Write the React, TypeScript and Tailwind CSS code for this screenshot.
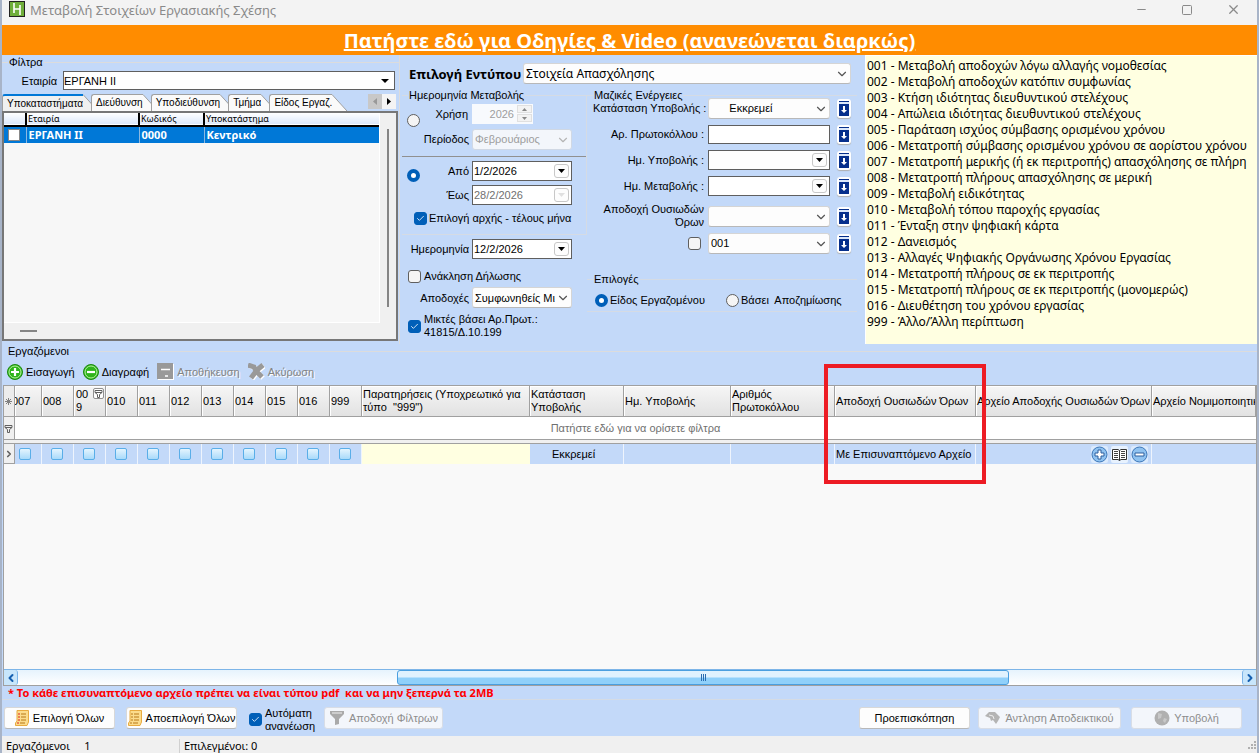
import React from 'react';
import { ChevronDown, ChevronLeft, ChevronRight, Check, Minus, Square, X } from 'lucide-react';

const codes = [
  '001 - Μεταβολή αποδοχών λόγω αλλαγής νομοθεσίας',
  '002 - Μεταβολή αποδοχών κατόπιν συμφωνίας',
  '003 - Κτήση ιδιότητας διευθυντικού στελέχους',
  '004 - Απώλεια ιδιότητας διευθυντικού στελέχους',
  '005 - Παράταση ισχύος σύμβασης ορισμένου χρόνου',
  '006 - Μετατροπή σύμβασης ορισμένου χρόνου σε αορίστου χρόνου',
  '007 - Μετατροπή μερικής (ή εκ περιτροπής) απασχόλησης σε πλήρη',
  '008 - Μετατροπή πλήρους απασχόλησης σε μερική',
  '009 - Μεταβολή ειδικότητας',
  '010 - Μεταβολή τόπου παροχής εργασίας',
  '011 - Ένταξη στην ψηφιακή κάρτα',
  '012 - Δανεισμός',
  '013 - Αλλαγές Ψηφιακής Οργάνωσης Χρόνου Εργασίας',
  '014 - Μετατροπή πλήρους σε εκ περιτροπής',
  '015 - Μετατροπή πλήρους σε εκ περιτροπής (μονομερώς)',
  '016 - Διευθέτηση του χρόνου εργασίας',
  '999 - Άλλο/Άλλη περίπτωση',
];

const flagColumns = ['007', '008', '009', '010', '011', '012', '013', '014', '015', '016', '999'];

interface TabProps {
  label: string;
  active?: boolean;
}

const Tab: React.FC<TabProps> = ({ label, active }) => (
  <button type="button" role="tab" aria-selected={!!active} className="-mr-[7px] flex h-[17px] text-[10px] leading-[15px]">
    <span
      className={`h-full rounded-tl-[3px] border-l border-t pl-1 whitespace-nowrap ${
        active ? 'border-l-[#a0a0a0] border-t-2 border-t-[#0078d7] bg-[#f0f0f0]' : 'border-[#a0a0a0] bg-[#fafafa]'
      }`}
    >
      {label}
    </span>
    <svg width="15" height="17" viewBox="0 0 15 17" className="shrink-0">
      <path d="M0 0.5L15 17H0z" fill={active ? '#f0f0f0' : '#fafafa'} />
      <path d="M0 0.5L15 17" stroke="#a0a0a0" />
    </svg>
  </button>
);

interface ComboProps {
  id: string;
  value: string;
  disabled?: boolean;
  className?: string;
}

const Combo: React.FC<ComboProps> = ({ id, value, disabled, className = '' }) => (
  <div className={`relative h-[21px] ${className}`}>
    <select
      id={id}
      disabled={disabled}
      className="block h-full w-full appearance-none rounded-[3px] border border-[#d5d5d5] border-b-[#b8b8b8] bg-[#fdfdfd] pr-4 pl-[2px] disabled:border-[#d0d8e4] disabled:bg-[#f3f6fb] disabled:text-[#9d9d9d] disabled:opacity-100"
    >
      <option>{value}</option>
    </select>
    <ChevronDown size={14} strokeWidth={2} className={`pointer-events-none absolute top-1 right-[2px] ${disabled ? 'text-[#b5b5b5]' : 'text-[#555]'}`} />
  </div>
);

const DateField: React.FC<ComboProps> = ({ id, value, disabled, className = '' }) => (
  <div className={`flex h-5 items-center border border-[#5f5f5f] bg-white pr-[2px] ${className}`}>
    <input id={id} defaultValue={value} disabled={disabled} className="w-0 min-w-0 flex-1 pl-px disabled:text-[#707070]" />
    <button type="button" aria-label="Ημερολόγιο" disabled={disabled} className="flex h-[14px] w-[15px] shrink-0 items-center justify-center rounded-[3px] border border-[#c8c8c8] bg-[#fdfdfd]">
      <svg width="7" height="4" viewBox="0 0 7 4">
        <path d="M0 0H7L3.5 4z" fill={disabled ? '#e0e0e0' : '#000'} />
      </svg>
    </button>
  </div>
);

interface TickProps {
  id?: string;
  label?: string;
  checked?: boolean;
}

const Tick: React.FC<TickProps> = ({ id, label, checked }) => (
  <span className="relative flex h-[13px] w-[13px] shrink-0">
    <input
      id={id}
      type="checkbox"
      aria-label={label}
      defaultChecked={checked}
      className="peer h-[13px] w-[13px] appearance-none rounded-[3px] border border-[#5f5f5f] bg-[#f5f5f5] checked:border-[#005fb8] checked:bg-[#005fb8]"
    />
    <Check size={9} strokeWidth={2.5} className="pointer-events-none absolute top-[2px] left-[2px] hidden text-[#d8e8f8] peer-checked:block" />
  </span>
);

interface RadioProps {
  id: string;
  name: string;
  label?: string;
  checked?: boolean;
}

const Radio: React.FC<RadioProps> = ({ id, name, label, checked }) => (
  <input
    id={id}
    name={name}
    type="radio"
    aria-label={label}
    defaultChecked={checked}
    className="h-[13px] w-[13px] shrink-0 appearance-none rounded-full border border-[#5f5f5f] bg-[#f5f5f5] checked:border-4 checked:border-[#005fb8] checked:bg-white"
  />
);

const ApplyButton = () => (
  <button type="button" aria-label="Εφαρμογή σε όλους" className="flex h-[19px] w-[14px] shrink-0 items-center justify-center rounded-[3px] bg-white shadow-[0_1px_1px_#b0b0b0]">
    <svg width="10" height="15" viewBox="0 0 10 15">
      <rect width="10" height="15" fill="#062f8c" />
      <rect y="1" width="10" height="2" fill="#dce8fa" />
      <path d="M4 5H6V9H8L5 12L2 9H4z" fill="#fff" />
    </svg>
  </button>
);

const FunnelIcon = () => (
  <svg width="9" height="9" viewBox="0 0 9 9">
    <path d="M1 1.5H8V3.5L5.5 5.5V8.5H3.5V5.5L1 3.5zM1 3.5H8" fill="none" stroke="#606060" />
  </svg>
);

interface BulkRowProps {
  id: string;
  label: string;
  children: React.ReactNode;
}

const BulkRow: React.FC<BulkRowProps> = ({ id, label, children }) => (
  <div className="flex h-[26px] items-center">
    <label htmlFor={id} className="w-[111px] shrink-0 text-right whitespace-nowrap">{label}</label>
    <div className="ml-1 w-[122px] shrink-0">{children}</div>
    <div className="ml-[7px]"><ApplyButton /></div>
  </div>
);

const Filters = () => (
  <section className="flex w-[398px] shrink-0 flex-col border-r border-[#dcdcdc] pb-[3px]">
    <fieldset className="flex min-h-0 flex-1 flex-col border-t border-[#dcdcdc] pr-px">
      <legend className="ml-[6px] px-px leading-[14px]">Φίλτρα</legend>
      <div className="mt-[2px] flex items-center pr-[3px]">
        <label htmlFor="company" className="w-[61px] shrink-0 pt-px pr-[6px] text-right">Εταιρία</label>
        <div className="relative h-[19px] flex-1">
          <select id="company" className="block h-full w-full appearance-none border border-[#5f5f5f] bg-white pr-4">
            <option>ΕΡΓΑΝΗ ΙΙ</option>
          </select>
          <svg width="8" height="4" viewBox="0 0 8 4" className="pointer-events-none absolute top-2 right-[6px]">
            <path d="M0 0H8L4 4z" fill="#000" />
          </svg>
        </div>
      </div>
      <div className="mt-1 flex items-end justify-between pr-[2px]">
        <div role="tablist" className="flex">
          <Tab label="Υποκαταστήματα" active />
          <Tab label="Διεύθυνση" />
          <Tab label="Υποδιεύθυνση" />
          <Tab label="Τμήμα" />
          <Tab label="Είδος Εργαζ." />
        </div>
        <div className="mb-[2px] flex h-[15px]">
          <button type="button" aria-label="Προηγούμενη καρτέλα" className="flex w-[14px] items-center justify-center bg-[#c8c8c8]">
            <svg width="4" height="7" viewBox="0 0 4 7"><path d="M4 0V7L0 3.5z" fill="#999" /></svg>
          </button>
          <button type="button" aria-label="Επόμενη καρτέλα" className="flex w-[14px] items-center justify-center bg-[#f4f4f4]">
            <svg width="4" height="7" viewBox="0 0 4 7"><path d="M0 0V7L4 3.5z" fill="#000" /></svg>
          </button>
        </div>
      </div>
      <div className="flex min-h-0 flex-1 flex-col border-2 border-[#777] bg-[#f0f0f0] font-['Noto_Sans',sans-serif]">
        <div className="flex flex-1">
          <div className="flex-1 border-r border-b border-white bg-[#f7f7f7]">
            <table className="w-full table-fixed border-collapse text-left">
              <colgroup>
                <col className="w-[22px]" />
                <col className="w-[113px]" />
                <col className="w-[65px]" />
                <col />
              </colgroup>
              <thead>
                <tr className="h-[13px] border-b-2 border-black bg-linear-to-b from-white to-[#dce8fa] text-[9px] leading-[12px]">
                  <th className="font-normal" />
                  <th className="border-l-2 border-black pl-px font-normal">Εταιρία</th>
                  <th className="border-l-2 border-black pl-px font-normal">Κωδικός</th>
                  <th className="border-l-2 border-black pl-px font-normal">Υποκατάστημα</th>
                </tr>
              </thead>
              <tbody>
                <tr className="h-4 bg-[#0078d7] leading-4 text-white">
                  <td className="pl-1">
                    <input type="checkbox" aria-label="ΕΡΓΑΝΗ ΙΙ" className="block h-3 w-3 appearance-none border border-[#888] bg-white" />
                  </td>
                  <td className="border-l border-[#8cb8e0] pl-[2px] font-bold">ΕΡΓΑΝΗ ΙΙ</td>
                  <td className="border-l border-[#8cb8e0] pl-[2px] font-bold">0000</td>
                  <td className="border-l border-[#8cb8e0] pl-[2px] font-bold">Κεντρικό</td>
                </tr>
              </tbody>
            </table>
          </div>
          <div className="flex w-4 justify-center pt-4 pb-4">
            <div className="w-[2px] bg-[#858585]" />
          </div>
        </div>
        <div className="flex h-4 items-center pl-4">
          <div className="h-[2px] w-[17px] bg-[#858585]" />
        </div>
      </div>
    </fieldset>
  </section>
);

const PeriodPanel = () => (
  <div className="w-[185px] shrink-0">
    <fieldset className="border border-[#d5dbe4] border-l-0">
      <legend className="ml-[6px] px-px leading-3">Ημερομηνία Μεταβολής</legend>
      <div className="flex h-[56px] items-center border-b border-[#909090] pl-[5px]">
        <div className="-mt-4 flex"><Radio id="by-period" name="period" label="Χρήση και περίοδος" /></div>
        <div className="flex flex-1 flex-col gap-[5px] pb-1">
          <div className="flex items-center">
            <label htmlFor="year" className="w-[52px] pr-1 text-right">Χρήση</label>
            <div className="flex h-5 w-[61px] items-center bg-[#f8fafd] pr-px">
              <input id="year" defaultValue="2026" disabled className="w-0 min-w-0 flex-1 pr-[3px] text-right text-[#9d9d9d]" />
              <div className="flex flex-col gap-px">
                <button type="button" disabled aria-label="Αύξηση" className="flex h-2 w-[15px] items-center justify-center border border-[#e0e0e0] bg-[#f3f3f3]">
                  <svg width="5" height="3" viewBox="0 0 5 3"><path d="M0 3H5L2.5 0z" fill="#888" /></svg>
                </button>
                <button type="button" disabled aria-label="Μείωση" className="flex h-2 w-[15px] items-center justify-center border border-[#e0e0e0] bg-[#f3f3f3]">
                  <svg width="5" height="3" viewBox="0 0 5 3"><path d="M0 0H5L2.5 3z" fill="#888" /></svg>
                </button>
              </div>
            </div>
          </div>
          <div className="flex items-center">
            <label htmlFor="month" className="w-[52px] pr-[3px] text-right">Περίοδος</label>
            <Combo id="month" value="Φεβρουάριος" disabled className="w-[100px]" />
          </div>
        </div>
      </div>
      <div className="flex flex-col pt-1 pb-[9px] pl-[5px]">
        <div className="flex items-start">
          <div className="flex pt-2"><Radio id="by-range" name="period" label="Από - Έως" checked /></div>
          <div className="flex flex-col gap-1">
            <div className="flex items-center">
              <label htmlFor="from" className="w-[52px] pr-[3px] text-right">Από</label>
              <DateField id="from" value="1/2/2026" className="w-[100px]" />
            </div>
            <div className="flex items-center">
              <label htmlFor="to" className="w-[52px] pr-[3px] text-right">Έως</label>
              <DateField id="to" value="28/2/2026" disabled className="w-[100px]" />
            </div>
          </div>
        </div>
        <div className="flex items-center gap-[2px] pt-[6px] pl-[7px]">
          <Tick id="month-bounds" checked />
          <label htmlFor="month-bounds" className="whitespace-nowrap">Επιλογή αρχής - τέλους μήνα</label>
        </div>
      </div>
    </fieldset>
    <div className="flex items-center pt-1 pl-[5px]">
      <label htmlFor="date" className="w-[65px] pr-[3px] text-right">Ημερομηνία</label>
      <DateField id="date" value="12/2/2026" className="w-[100px]" />
    </div>
    <div className="mt-[10px] flex items-center gap-[3px] pl-[6px]">
      <Tick id="recall" />
      <label htmlFor="recall">Ανάκληση Δήλωσης</label>
    </div>
    <div className="mt-1 flex items-center pl-[5px]">
      <label htmlFor="pay" className="w-[65px] pr-[3px] text-right">Αποδοχές</label>
      <Combo id="pay" value="Συμφωνηθείς Μισθός" className="w-[100px]" />
    </div>
    <div className="mt-[5px] flex items-center gap-[3px] pl-[6px]">
      <Tick id="mixed" checked />
      <label htmlFor="mixed" className="leading-[13px]">
        Μικτές βάσει Αρ.Πρωτ.:
        <br />
        41815/Δ.10.199
      </label>
    </div>
  </div>
);

const BulkPanel = () => (
  <div className="min-w-0 flex-1">
    <fieldset className="border-t border-[#d5dbe4] pl-[6px]">
      <legend className="px-px leading-3">Μαζικές Ενέργειες</legend>
      <div className="-mt-[6px]">
        <BulkRow id="status" label="Κατάσταση Υποβολής :">
          <Combo id="status" value={'\u00a0\u00a0\u00a0\u00a0\u00a0\u00a0Εκκρεμεί'} />
        </BulkRow>
        <BulkRow id="protocol" label="Αρ. Πρωτοκόλλου :">
          <input id="protocol" className="block h-[19px] w-full border border-[#5f5f5f] bg-white px-1" />
        </BulkRow>
        <BulkRow id="submitted" label="Ημ. Υποβολής :"><DateField id="submitted" value="" /></BulkRow>
        <BulkRow id="changed" label="Ημ. Μεταβολής :"><DateField id="changed" value="" /></BulkRow>
        <div className="flex h-[34px] items-center">
          <label htmlFor="terms" className="w-[111px] shrink-0 text-right leading-[13px] whitespace-nowrap">
            Αποδοχή Ουσιωδών
            <br />
            Όρων
          </label>
          <Combo id="terms" value="" className="ml-1 w-[122px] shrink-0" />
          <div className="ml-[7px]"><ApplyButton /></div>
        </div>
        <div className="flex h-5 items-center">
          <div className="flex w-[111px] shrink-0 justify-end pr-[3px]"><Tick label="Εφαρμογή κωδικού" /></div>
          <div className="ml-1 w-[122px] shrink-0">
            <Combo id="code" value="001" />
          </div>
          <div className="ml-[7px]"><ApplyButton /></div>
        </div>
      </div>
    </fieldset>
    <fieldset className="mt-5 border-t border-b border-[#d5dbe4] pb-1 pl-[6px]">
      <legend className="px-px leading-3">Επιλογές</legend>
      <div className="flex h-[22px] items-center pt-[8px] pl-[2px]">
        <div className="flex w-[131px] items-center gap-[2px]">
          <Radio id="kind" name="options" checked />
          <label htmlFor="kind" className="whitespace-nowrap">Είδος Εργαζομένου</label>
        </div>
        <div className="flex items-center gap-[2px]">
          <Radio id="severance" name="options" />
          <label htmlFor="severance" className="whitespace-pre">Βάσει  Αποζημίωσης</label>
        </div>
      </div>
    </fieldset>
  </div>
);

const Ball = ({ plus }: { plus?: boolean }) => (
  <svg width="16" height="16" viewBox="0 0 16 16">
    <circle cx="8" cy="8" r="7.5" fill="#2fb41c" stroke="#1d8a10" />
    <circle cx="8" cy="8" r="6" fill="none" stroke="#b4f09c" />
    <path d={plus ? 'M8 4V12M4 8H12' : 'M4 8H12'} stroke="#fff" strokeWidth="2.2" />
  </svg>
);

const Toolbar = () => (
  <div className="flex h-[27px] items-center gap-2 pl-[5px]">
    <button type="button" className="flex items-center gap-[3px]"><Ball plus />Εισαγωγή</button>
    <button type="button" className="flex items-center gap-[3px]"><Ball />Διαγραφή</button>
    <button type="button" disabled className="flex items-center gap-[3px] text-[#838383] [text-shadow:1px_1px_0_#fff]">
      <svg width="17" height="17" viewBox="0 0 17 17">
        <path d="M1 1H17V17H1z" fill="#fff" />
        <path d="M0 0H16V16H0z" fill="#999" />
        <path d="M4 6.5H13M8 13H11" stroke="#fff" strokeWidth="1.6" />
      </svg>
      Αποθήκευση
    </button>
    <button type="button" disabled className="flex items-center gap-[3px] text-[#838383] [text-shadow:1px_1px_0_#fff]">
      <svg width="17" height="17" viewBox="0 0 17 17">
        <path d="M2 3L7 5L9 9L15 15M16 3L10 8L4 16" fill="none" stroke="#fff" strokeWidth="5" />
        <path d="M0 2L6 4L8 8L14 14M15 2L9 7L3 15" fill="none" stroke="#999" strokeWidth="5" />
      </svg>
      Ακύρωση
    </button>
  </div>
);

const headCell = 'overflow-hidden border-r border-b border-[#a0a0a0] bg-linear-to-b from-[#f6f6f6] to-[#e2e2e2] px-px text-left font-normal leading-[13px] shadow-[inset_1px_1px_0_#fff]';
const rowCell = 'overflow-hidden border-r border-[#eef4fd] whitespace-nowrap';

const EmployeesGrid = () => (
  <div className="ml-px flex min-h-0 flex-1 flex-col overflow-hidden border border-[#a0a0a0] bg-[#f9f9f9]">
    <table className="w-full table-fixed border-separate border-spacing-0">
      <colgroup>
        <col className="w-[11px]" />
        <col className="w-[27px]" />
        {flagColumns.slice(1).map((code) => <col key={code} className="w-8" />)}
        <col className="w-[168px]" />
        <col className="w-[94px]" />
        <col className="w-[107px]" />
        <col className="w-[104px]" />
        <col className="w-[141px]" />
        <col className="w-[176px]" />
        <col />
      </colgroup>
      <thead>
        <tr className="h-[31px]">
          <th className="border-r border-b border-[#a0a0a0] bg-[#ececec]">
            <svg width="9" height="9" viewBox="0 0 9 9">
              <path d="M4.5 1V8M1 4.5H8M2 2L7 7M7 2L2 7" stroke="#808080" />
            </svg>
          </th>
          {flagColumns.map((code, i) => (
            <th key={code} className={headCell}>
              {i === 0 && <span className="-ml-[4px]">{code}</span>}
              {i === 2 && (
                <span className="flex items-start justify-between pl-px">
                  <span>00<br />9</span>
                  <span className="flex h-[11px] w-[11px] items-center justify-center rounded-[2px] border border-[#909090] bg-white"><FunnelIcon /></span>
                </span>
              )}
              {i !== 0 && i !== 2 && code}
            </th>
          ))}
          <th className={`${headCell} whitespace-pre`}>Παρατηρήσεις (Υποχρεωτικό για{'\n'}τύπο  "999")</th>
          <th className={headCell}>Κατάσταση Υποβολής</th>
          <th className={headCell}>Ημ. Υποβολής</th>
          <th className={headCell}>Αριθμός Πρωτοκόλλου</th>
          <th className={`${headCell} whitespace-nowrap`}>Αποδοχή Ουσιωδών Όρων</th>
          <th className={`${headCell} whitespace-nowrap`}>Αρχείο Αποδοχής Ουσιωδών Όρων</th>
          <th className={`${headCell} whitespace-nowrap`}>Αρχείο Νομιμοποιητικ</th>
        </tr>
      </thead>
      <tbody>
        <tr className="h-[23px]">
          <td className="border-r border-b border-[#a0a0a0] bg-[#f0f0f0]"><FunnelIcon /></td>
          <td colSpan={18} className="border-b border-[#a0a0a0] bg-white text-center text-[#707070]">Πατήστε εδώ για να ορίσετε φίλτρα</td>
        </tr>
        <tr className="h-1">
          <td colSpan={19} className="border-b border-[#a0a0a0] bg-[#f0f0f0] p-0" />
        </tr>
        <tr className="h-5 bg-[#c3d9f9]">
          <td className="border-r border-b border-[#a0a0a0] bg-[#f0f0f0]"><ChevronRight size={10} strokeWidth={4} className="text-[#606060]" /></td>
          {flagColumns.map((code, i) => (
            <td key={code} className={rowCell}>
              <input
                type="checkbox"
                aria-label={code}
                className={`block h-3 w-3 appearance-none rounded-[2px] border border-[#5aaee8] bg-linear-to-b from-[#e4f4fe] to-[#a8dafa] ${i === 0 ? 'ml-1' : 'ml-[9px]'}`}
              />
            </td>
          ))}
          <td className="bg-[#ffffe1]" />
          <td className={`${rowCell} pr-[6px] text-center`}>Εκκρεμεί</td>
          <td className={rowCell} />
          <td className={rowCell} />
          <td className={`${rowCell} pl-px`}>Με Επισυναπτόμενο Αρχείο</td>
          <td className={rowCell}>
            <div className="flex justify-end gap-[3px] pr-[3px]">
              <button type="button" aria-label="Προσθήκη αρχείου" className="rounded-[2px] bg-[#dcebfd]">
                <svg width="17" height="17" viewBox="0 0 17 17">
                  <circle cx="8.5" cy="8.5" r="7.5" fill="#8fc2f0" stroke="#3d76b8" />
                  <path d="M7 4H10V7H13V10H10V13H7V10H4V7H7z" fill="#fff" stroke="#2c5f9e" />
                </svg>
              </button>
              <button type="button" aria-label="Προβολή αρχείου" className="rounded-[2px] bg-[#e8f2fe]">
                <svg width="17" height="17" viewBox="0 0 17 17">
                  <path d="M1.5 3.5H7L8.5 4.5L10 3.5H15.5V13.5H10L8.5 14.5L7 13.5H1.5zM8.5 4.5V14.5" fill="#fff" stroke="#333" />
                  <path d="M3 5.5H7M3 7.5H7M3 9.5H7M3 11.5H7M10 5.5H14M10 7.5H14M10 9.5H14M10 11.5H14" stroke="#444" />
                </svg>
              </button>
              <button type="button" aria-label="Αφαίρεση αρχείου" className="rounded-[2px] bg-[#dcebfd]">
                <svg width="17" height="17" viewBox="0 0 17 17">
                  <circle cx="8.5" cy="8.5" r="7.5" fill="#8fc2f0" stroke="#3d76b8" />
                  <path d="M4 7H13V10H4z" fill="#fff" stroke="#2c5f9e" />
                </svg>
              </button>
            </div>
          </td>
          <td />
        </tr>
      </tbody>
    </table>
    <div className="mt-auto flex h-4 border-t border-[#7db5e8] bg-linear-to-b from-[#e6f3fd] to-white">
      <button type="button" aria-label="Κύλιση αριστερά" className="flex w-[14px] items-center justify-center rounded-r-[3px] border-r border-[#7db5e8] bg-[#c8e6fb] text-[#1560b0]">
        <ChevronLeft size={12} strokeWidth={4} />
      </button>
      <div className="flex flex-1">
        <div className="w-[31%]" />
        <div className="flex w-[50%] items-center justify-center gap-px rounded-[3px] border border-[#4b9fdf] bg-linear-to-b from-[#e0f2fe] from-45% to-[#8fd0fa] to-55%">
          <span className="h-[7px] w-px bg-[#2a6cb0]" />
          <span className="h-[7px] w-px bg-[#2a6cb0]" />
          <span className="h-[7px] w-px bg-[#2a6cb0]" />
        </div>
      </div>
      <button type="button" aria-label="Κύλιση δεξιά" className="flex w-[14px] items-center justify-center rounded-l-[3px] border-l border-[#7db5e8] bg-[#c8e6fb] text-[#1560b0]">
        <ChevronRight size={12} strokeWidth={4} />
      </button>
    </div>
  </div>
);

const pushButton = 'flex h-[22px] items-center justify-center gap-1 rounded-[3px] border border-[#d8d8d8] border-b-[#b8b8b8] bg-[#fdfdfd] whitespace-nowrap disabled:border-[#d8dde6] disabled:bg-[#f3f6fb] disabled:text-[#8d8d8d]';

const ListIcon = ({ ticks }: { ticks?: boolean }) => (
  <svg width="14" height="16" viewBox="0 0 14 16" className="shrink-0">
    <path d="M2 0.5H13.5V12L12 15.5H0.5V13L2 11z" fill="#fbdc8c" stroke="#e8ab40" />
    <path d="M6 4H11M6 7H11M6 10H11M5 13H10" stroke="#b87818" />
    <path d="M3 4H5M3 7H5M3 10H5M2 13H4" stroke={ticks ? '#e02020' : '#b87818'} />
  </svg>
);

const Footer = () => (
  <div className="flex h-[37px] shrink-0 items-center border-t border-[#d5dbe4] pr-[15px] pb-px pl-[2px]">
    <button type="button" className={`${pushButton} w-[111px]`}><ListIcon ticks />Επιλογή Όλων</button>
    <button type="button" className={`${pushButton} ml-[11px] w-[111px]`}><ListIcon />Αποεπιλογή Όλων</button>
    <div className="ml-3 flex items-center gap-[3px] pt-1">
      <Tick id="auto" checked />
      <label htmlFor="auto" className="w-12 leading-[13px]">Αυτόματη<br />ανανέωση</label>
    </div>
    <button type="button" disabled className={`${pushButton} ml-[11px] w-[119px]`}>
      <svg width="16" height="16" viewBox="0 0 16 16">
        <path d="M1 1H15V4L10 9V14L6 15V9L1 4z" fill="#aaa" />
        <path d="M3 3H13" stroke="#d8d8d8" strokeWidth="1.5" />
      </svg>
      Αποδοχή Φίλτρων
    </button>
    <button type="button" className={`${pushButton} ml-auto w-[111px]`}>Προεπισκόπηση</button>
    <button type="button" disabled className={`${pushButton} ml-2 w-[143px]`}>
      <svg width="16" height="14" viewBox="0 0 16 14">
        <path d="M0 5L4 1L10 1L15 6L13 10L11 13L8 9L6 10L5 7z" fill="#b4b4b4" />
        <path d="M4 4L8 5L9 8" fill="none" stroke="#eee" />
      </svg>
      Άντληση Αποδεικτικού
    </button>
    <button type="button" disabled className={`${pushButton} ml-[10px] w-[111px]`}>
      <svg width="16" height="16" viewBox="0 0 16 16">
        <circle cx="8" cy="8" r="7.5" fill="#b0b0b0" />
        <path d="M4 3L8 4L7 8L4 9zM10 8L13 9L11 13L9 11z" fill="#c8c8c8" />
      </svg>
      Υποβολή
    </button>
  </div>
);

export default function App() {
  return (
    <div className="flex min-h-screen flex-col border-x-2 border-[#a8b4c8] bg-[#c3d9f9] font-['Liberation_Sans',sans-serif] text-[11px] leading-[14px] text-black">
      <header className="flex h-[25px] shrink-0 items-center bg-[#f3f3f3] pl-[7px] font-['Noto_Sans',sans-serif] text-[13px] text-[#8a8a8a]">
        <svg width="16" height="16" viewBox="0 0 16 16" className="mb-[7px]">
          <rect x="0.5" y="0.5" width="15" height="15" fill="#6fae3a" stroke="#222" />
          <path d="M5 2V12M11 4V14M5 8H11" stroke="#fff" strokeWidth="1.6" />
        </svg>
        <h1 className="mb-[5px] ml-[5px]">Μεταβολή Στοιχείων Εργασιακής Σχέσης</h1>
        <div className="mb-[6px] ml-auto flex gap-[33px] pr-4">
          <button type="button" aria-label="Ελαχιστοποίηση"><Minus size={13} strokeWidth={2} /></button>
          <button type="button" aria-label="Μεγιστοποίηση"><Square size={12} strokeWidth={2} /></button>
          <button type="button" aria-label="Κλείσιμο"><X size={15} strokeWidth={2} /></button>
        </div>
      </header>
      <div className="flex h-[30px] shrink-0 items-center justify-center bg-[#ff8c00] pt-[2px]">
        <a href="#help" className="font-['Noto_Sans',sans-serif] text-[20px] leading-6 font-bold text-white underline">Πατήστε εδώ για Οδηγίες & Video (ανανεώνεται διαρκώς)</a>
      </div>

      <main className="flex flex-1 flex-col">
        <div className="flex h-[289px] shrink-0">
          <Filters />
          <section className="flex w-[465px] shrink-0 flex-col pt-2 pr-2 pl-[2px]">
            <div className="flex items-center pr-[6px] pl-[7px] font-['Noto_Sans',sans-serif]">
              <label htmlFor="form-type" className="w-[110px] text-[13px] font-bold whitespace-nowrap">Επιλογή Εντύπου</label>
              <Combo id="form-type" value="Στοιχεία Απασχόλησης" className="ml-1 flex-1 text-[12px]" />
            </div>
            <div className="mt-[5px] flex">
              <PeriodPanel />
              <BulkPanel />
            </div>
          </section>
          <ul className="min-w-0 flex-1 overflow-hidden border-t border-l border-white bg-[#ffffe1] pt-[2px] pl-px font-['Noto_Sans',sans-serif] text-[12px] leading-4 whitespace-nowrap">
            {codes.map((code) => <li key={code}>{code}</li>)}
          </ul>
        </div>

        <section aria-labelledby="employees" className="relative flex flex-1 flex-col">
          <div className="flex items-center gap-px">
            <h2 id="employees" className="pl-[6px]">Εργαζόμενοι</h2>
            <div className="h-px flex-1 bg-[#dcdcdc]" />
          </div>
          <Toolbar />
          <EmployeesGrid />
          <div className="pointer-events-none absolute top-[20px] left-[822px] h-[120px] w-[162px] border-4 border-[#ed1c24]" />
        </section>
        <p className="h-[13px] shrink-0 pl-[6px] font-['Noto_Sans',sans-serif] leading-[14px] font-bold whitespace-pre text-[#ff0000]">* Το κάθε επισυναπτόμενο αρχείο πρέπει να είναι τύπου pdf  και να μην ξεπερνά τα 2MB</p>
        <Footer />
      </main>
      <footer className="flex h-[17px] shrink-0 items-center bg-[#f0f0f0] pt-[2px] font-['Noto_Sans',sans-serif]">
        <span className="w-[178px] border-r border-[#d0d0d0] pl-1 whitespace-pre">Εργαζόμενοι     1</span>
        <span className="pl-1">Επιλεγμένοι: 0</span>
        <svg width="9" height="9" viewBox="0 0 9 9" className="ml-auto">
          <path d="M6 0H8V2H6zM3 3H5V5H3zM6 3H8V5H6zM0 6H2V8H0zM3 6H5V8H3zM6 6H8V8H6z" fill="#b0b0b0" />
        </svg>
      </footer>
    </div>
  );
}
